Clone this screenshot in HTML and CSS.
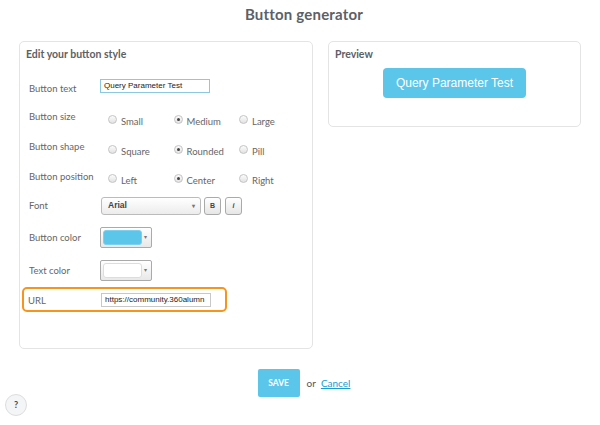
FILE: index.html
```html
<!DOCTYPE html>
<html>
<head>
<meta charset="utf-8">
<link rel="stylesheet" href="styles.css">
</head>
<body>
<h1 class="title">Button generator</h1>
<div class="columns">
  <div class="panel edit">
    <h2 class="panel-title">Edit your button style</h2>
    <div class="row r-text">
      <span class="label">Button text</span>
      <span class="input focus">Query Parameter Test</span>
    </div>
    <div class="row r-radio">
      <span class="label">Button size</span>
      <div class="radios">
        <span class="opt"><span class="radio"></span>Small</span>
        <span class="opt"><span class="radio on"></span>Medium</span>
        <span class="opt"><span class="radio"></span>Large</span>
      </div>
    </div>
    <div class="row r-radio">
      <span class="label">Button shape</span>
      <div class="radios">
        <span class="opt"><span class="radio"></span>Square</span>
        <span class="opt"><span class="radio on"></span>Rounded</span>
        <span class="opt"><span class="radio"></span>Pill</span>
      </div>
    </div>
    <div class="row r-radio">
      <span class="label">Button position</span>
      <div class="radios">
        <span class="opt"><span class="radio"></span>Left</span>
        <span class="opt"><span class="radio on"></span>Center</span>
        <span class="opt"><span class="radio"></span>Right</span>
      </div>
    </div>
    <div class="row r-font">
      <span class="label">Font</span>
      <div class="font-ctrls">
        <span class="select">Arial<span class="caret">▾</span></span>
        <span class="tbtn b">B</span>
        <span class="tbtn i">i</span>
      </div>
    </div>
    <div class="row r-color">
      <span class="label">Button color</span>
      <span class="picker"><span class="swatch blue"></span><span class="caret">▾</span></span>
    </div>
    <div class="row r-color2">
      <span class="label">Text color</span>
      <span class="picker"><span class="swatch white"></span><span class="caret">▾</span></span>
    </div>
    <div class="row r-url">
      <span class="label">URL</span>
      <span class="input">https://community.360alumn</span>
    </div>
  </div>
  <div class="panel preview">
    <h2 class="panel-title">Preview</h2>
    <div class="preview-body">
      <span class="preview-btn">Query Parameter Test</span>
    </div>
  </div>
</div>
<div class="actions">
  <span class="save">SAVE</span>
  <span class="or">or</span>
  <a class="cancel" href="#">Cancel</a>
</div>
<span class="help">?</span>
</body>
</html>
```
FILE: styles.css
```css
html, body { margin: 0; padding: 0; background: #fff; }
body {
  width: 600px; height: 425px; position: relative; overflow: hidden;
  font-family: Lato, "Open Sans", Arial, sans-serif; color: #666;
}
.title {
  margin: 0; height: 41px; box-sizing: border-box; padding-top: 5px;
  text-align: center; font-size: 15px; font-weight: 700; color: #5d6066;
  letter-spacing: 0.2px; padding-left: 8px;
}
.columns { display: flex; gap: 15px; padding: 0 19px; align-items: flex-start; }
.panel {
  border: 1px solid #e4e4e4; border-radius: 5px; box-sizing: border-box; background: #fff;
}
.edit { width: 294px; height: 308px; }
.preview { width: 253px; height: 86px; }
.panel-title {
  margin: 0; font-size: 10.5px; font-weight: 700; color: #5d6066;
  padding: 6px 0 0 6px; height: 23px; box-sizing: border-box; line-height: 12px;
}
.edit .panel-title { height: 29px; }
.row { display: flex; align-items: center; padding-left: 9px; }
.label { width: 71px; flex: none; font-size: 9.5px; color: #666; }
.r-text { height: 30px; }
.r-text .label { padding-top: 4px; }
.r-radio { height: 29.7px; }
.r-radio .label { padding-top: 2px; }
.r-font { height: 31px; }
.r-color { height: 32px; }
.r-color2 { height: 34px; }
.input {
  width: 110px; height: 14px; box-sizing: border-box; border: 1px solid #c8c8c8;
  font-family: Arial, "Liberation Sans", sans-serif; font-size: 8px; color: #222;
  line-height: 12px; padding-left: 3px; white-space: nowrap; overflow: hidden;
}
.input.focus { border-color: #8cc8e0; }
.radios { display: flex; padding-left: 8px; padding-top: 11px; }
.opt { display: flex; align-items: center; font-size: 9.5px; color: #666; width: 65.5px; }
.radio {
  width: 9px; height: 9px; border-radius: 50%; box-sizing: border-box; margin-right: 4px;
  border: 1px solid #c4c4c4; background: linear-gradient(#fcfcfc, #e2e2e2); position: relative; top: -2px;
}
.radio.on::after {
  content: ""; position: absolute; left: 2px; top: 2px; width: 3px; height: 3px;
  border-radius: 50%; background: #444;
}
.font-ctrls { display: flex; gap: 3px; padding-left: 1px; }
.select {
  width: 100px; height: 18px; box-sizing: border-box; border: 1px solid #bbb; border-radius: 3px;
  background: linear-gradient(#fff, #ececec); font-family: Arial, "Liberation Sans", sans-serif;
  font-size: 8.5px; font-weight: 700; color: #444; padding-left: 6px; line-height: 15px; position: relative;
}
.caret { font-size: 6px; color: #777; position: absolute; right: 5px; top: 1px; }
.tbtn {
  width: 17px; height: 18px; box-sizing: border-box; border: 1px solid #aaa; border-radius: 3px;
  background: linear-gradient(#fff, #e6e6e6); font-family: Arial, "Liberation Sans", sans-serif;
  font-size: 7px; font-weight: 700; color: #444; text-align: center; line-height: 16px;
}
.tbtn.i { font-style: italic; margin-left: 1px; }
.picker {
  width: 52px; height: 21px; box-sizing: border-box; border: 1px solid #aaa; border-radius: 2px;
  background: linear-gradient(#fff, #e8e8e8); position: relative; display: block;
}
.picker .caret { top: 5px; right: 4px; }
.swatch {
  position: absolute; left: 2px; top: 2px; width: 39px; height: 15px; border-radius: 3px; box-sizing: border-box;
}
.swatch.blue { background: #5bc5ea; border: 1px solid #7fd0ee; }
.swatch.white { background: #fff; border: 1px solid #ddd; }
.r-url {
  height: 25px; margin-left: 2px; width: 205px; box-sizing: border-box;
  border: 2px solid #f7941d; border-radius: 5px; padding-left: 4px;
}
.r-url .label { width: 73px; padding-top: 2px; }
.r-url .input { width: 110px; }
.preview .panel-title { height: 26px; }
.preview-body { display: flex; justify-content: center; }
.preview-btn {
  width: 143px; height: 30px; border-radius: 4px; background: #5bc5ea; color: #fff;
  font-family: Arial, "Liberation Sans", sans-serif; font-size: 12px; line-height: 30px; text-align: center;
}
.actions { display: flex; align-items: center; justify-content: center; margin-top: 20px; padding-left: 8px; }
.save {
  width: 42px; height: 28px; background: #5bc5ea; border-radius: 2px; color: #fff;
  font-size: 8.5px; font-weight: 700; line-height: 28px; text-align: center;
}
.or { font-size: 10px; color: #555; margin-left: 7px; margin-right: 5px; }
.cancel { font-size: 10px; color: #1a9cd0; text-decoration: underline; }
.help {
  position: absolute; left: 5px; top: 394px; width: 22px; height: 22px; border-radius: 50%;
  box-sizing: border-box; border: 1px solid #ddd; background: #f4f5f7; color: #444;
  font-size: 9px; font-weight: 700; text-align: center; line-height: 20px;
}
```
